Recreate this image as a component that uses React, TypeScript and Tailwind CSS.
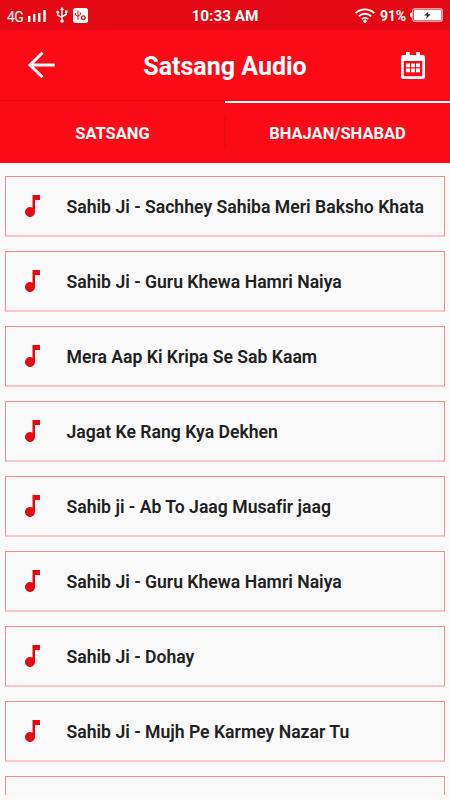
const songs = [
  'Sahib Ji - Sachhey Sahiba Meri Baksho Khata',
  'Sahib Ji - Guru Khewa Hamri Naiya',
  'Mera Aap Ki Kripa Se Sab Kaam',
  'Jagat Ke Rang Kya Dekhen',
  'Sahib ji - Ab To Jaag Musafir jaag',
  'Sahib Ji - Guru Khewa Hamri Naiya',
  'Sahib Ji - Dohay',
  'Sahib Ji - Mujh Pe Karmey Nazar Tu',
  '',
];

function StatusBar() {
  return (
    <div className="relative flex h-[30px] shrink-0 items-center justify-between bg-[#e30813] pr-[7px] pl-[7px] text-white">
      <div className="flex items-center">
        <span className="w-[18px] pt-[4px] text-[14px] leading-none tracking-[-0.6px]">4G</span>
        <svg width="20" height="14" viewBox="0 0 20 14" fill="currentColor" className="mt-[2px] ml-[2px]">
          <rect x="1" y="7" width="2.4" height="6" />
          <rect x="6" y="5" width="2.4" height="8" />
          <rect x="11" y="4" width="2.4" height="9" />
          <rect x="16.300" y="1" width="2.4" height="12" />
        </svg>
        <svg width="12" height="16" viewBox="0 0 12 16" fill="none" stroke="currentColor" strokeWidth="1.4" className="ml-[9px]">
          <path d="M6 2v11M1.8 5.500v2.800L6 10.500M10.200 4.500v3L6 9.500" />
          <path d="M6 0l2 3H4z" fill="currentColor" stroke="none" />
          <circle cx="6" cy="14" r="1.8" fill="currentColor" stroke="none" />
          <circle cx="1.8" cy="5.200" r="1.4" fill="currentColor" stroke="none" />
          <rect x="9" y="3.300" width="2.5" height="2.5" fill="currentColor" stroke="none" />
        </svg>
        <svg width="15" height="15" viewBox="0 0 15 15" fill="none" stroke="#e30813" className="ml-[5px]">
          <rect width="15" height="15" rx="2.5" fill="white" stroke="none" />
          <path d="M5 2.500v9.500M2.500 5v2L5 8.500M7.500 4.500v2L5 8" />
          <circle cx="10.300" cy="9.800" r="1.900" strokeWidth="1.300" />
        </svg>
      </div>
      <span className="absolute inset-x-0 top-0 text-center text-[15.300px] leading-[33px] font-bold">10:33 AM</span>
      <div className="flex items-center">
        <svg width="20" height="15" viewBox="0 0 20 15" fill="none" stroke="white" strokeWidth="1.800">
          <path d="M.7 5.200a13.200 13.200 0 0 1 18.600 0M3.800 8.300a8.800 8.800 0 0 1 12.400 0M6.800 11.200a4.500 4.500 0 0 1 6.400 0" />
          <circle cx="10" cy="13.200" r="1.700" fill="white" stroke="none" />
        </svg>
        <span className="mr-px ml-[5px] pt-px text-[14px] leading-[30px] font-bold tracking-[-0.1px]">91%</span>
        <svg width="33" height="14" viewBox="0 0 33 14" className="ml-[3px]">
          <path d="M3 4H2L0 5.500v3L2 10h1z" fill="white" />
          <rect x="2.700" y=".7" width="29.600" height="12.600" rx="2" fill="none" stroke="#f8a5a9" strokeWidth="1.300" />
          <rect x="4" y="1.700" width="27.300" height="10.600" fill="white" />
          <path d="M18.500 3.500l-4.500 4h3l-1 3.200 4.800-4.400h-3z" fill="#222" />
        </svg>
      </div>
    </div>
  );
}

function Header() {
  return (
    <header className="grid h-[71px] shrink-0 grid-cols-[82px_1fr_82px] items-center border-b border-[#e50912] bg-[#fd0a17] text-white">
      <svg width="28" height="28" viewBox="0 0 28 28" fill="none" stroke="currentColor" strokeWidth="3" className="ml-[27px]">
        <path d="M27.700 14H3M15.500 1.800L3 14l12.500 12.200" />
      </svg>
      <h1 className="pt-[4px] text-center text-[25px] leading-8 font-bold">Satsang Audio</h1>
      <svg width="24" height="27" viewBox="0 0 24 27" fill="currentColor" className="mt-px ml-[33px]">
        <path fillRule="evenodd" d="M5 0h3.700v3h6.600V0H19v3h2.500Q24 3 24 5.500v19q0 2.500-2.500 2.500h-19Q0 27 0 24.500v-19Q0 3 2.500 3H5zM2.700 9v15.300h18.600V9z" />
        <path d="M5 11.500h4v3.700H5zM10 11.500h4v3.700h-4zM15 11.500h4v3.700h-4zM5 16.500h4v3.700H5zM10 16.500h4v3.700h-4zM15 16.500h4v3.700h-4z" />
      </svg>
    </header>
  );
}

function Tabs() {
  return (
    <nav className="relative grid h-[62px] shrink-0 grid-cols-2 bg-[#fd0a17] text-center text-[16.500px] leading-[60px] font-bold text-white">
      <div className="border-t-2 border-transparent pt-px">SATSANG</div>
      <div className="border-t-2 border-white pt-px">BHAJAN/SHABAD</div>
      <span className="absolute top-[16px] left-[224px] h-8 w-[2px] bg-[#ee0915]" />
    </nav>
  );
}

function Note() {
  return (
    <svg width="15" height="22" viewBox="0 0 15 22" fill="#e50914" className="ml-[19px] shrink-0">
      <path d="M7.500 0H15v5h-5v12a5 5 0 1 1-2.500-4.300z" />
    </svg>
  );
}

export default function App() {
  return (
    <div className="flex h-[800px] w-[450px] flex-col overflow-hidden bg-[#fafafa] font-[Roboto,sans-serif]">
      <StatusBar />
      <Header />
      <Tabs />
      <main className="mb-[5px] flex min-h-0 flex-1 flex-col gap-[14px] overflow-hidden px-[5px] pt-[13px]">
        {songs.map((song, i) => (
          <div key={i} className="flex h-[61px] shrink-0 items-center border border-b-2 border-[#f98b90] border-b-[#fbc6c9] bg-[#f9f9f9]">
            <Note />
            <span className="ml-[26.500px] pt-[2px] text-[17.620px] leading-6 font-semibold whitespace-nowrap text-[#212121] [font-variant-ligatures:none]">{song}</span>
          </div>
        ))}
      </main>
    </div>
  );
}
